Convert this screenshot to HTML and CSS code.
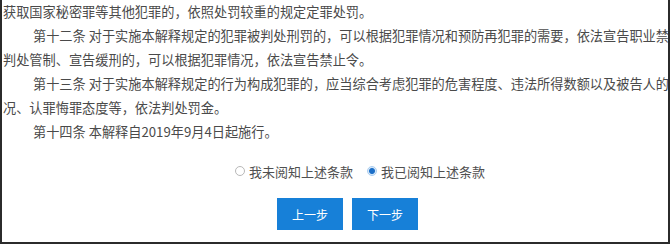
FILE: index.html
```html
<!DOCTYPE html>
<html lang="zh-CN">
<head>
    <meta charset="UTF-8">
    <meta name="viewport" content="width=device-width, initial-scale=1.0">
    <title>阅知条款</title>
    <link rel="stylesheet" href="styles.css">
</head>
<body>
    <div class="frame">
        <div class="terms">
            <p class="cont">获取国家秘密罪等其他犯罪的，依照处罚较重的规定定罪处罚。</p>
            <p>第十二条 对于实施本解释规定的犯罪被判处刑罚的，可以根据犯罪情况和预防再犯罪的需要，依法宣告职业禁止；被<br>判处管制、宣告缓刑的，可以根据犯罪情况，依法宣告禁止令。</p>
            <p>第十三条 对于实施本解释规定的行为构成犯罪的，应当综合考虑犯罪的危害程度、违法所得数额以及被告人的退赃退赔情<br>况、认罪悔罪态度等，依法判处罚金。</p>
            <p>第十四条 本解释自2019年9月4日起施行。</p>
        </div>

        <div class="agree">
            <label class="radio"><input type="radio" name="agree" value="0"> 我未阅知上述条款</label>
            <label class="radio"><input type="radio" name="agree" value="1" checked> 我已阅知上述条款</label>
        </div>

        <div class="actions">
            <button class="btn">上一步</button>
            <button class="btn">下一步</button>
        </div>
    </div>
</body>
</html>
```

FILE: styles.css
```css
body {
    margin: 0;
    background: #fff;
    font-family: "Noto Sans CJK SC", "Microsoft YaHei", sans-serif;
    color: #4a4a4a;
}
.frame {
    width: 666px;
    height: 242px;
    border: 2px solid #2b2b2b;
    border-top: none;
    overflow: hidden;
}
.terms {
    padding-left: 1px;
    font-size: 13.2px;
    line-height: 24px;
    white-space: nowrap;
}
.terms p {
    margin: 0;
    text-indent: 30px;
}
.terms p.cont {
    text-indent: 0;
}
.agree {
    display: flex;
    justify-content: center;
    align-items: center;
    gap: 14px;
    margin-top: 17px;
    padding-left: 50px;
    height: 20px;
    font-size: 13px;
    color: #505050;
}
.radio {
    display: flex;
    align-items: center;
    gap: 4px;
}
.radio input {
    appearance: none;
    -webkit-appearance: none;
    width: 10px;
    height: 10px;
    margin: 0;
    border: 1px solid #b8b8b8;
    border-radius: 50%;
    background: #fff;
}
.radio input:checked {
    border-color: #a9cdf0;
    background: radial-gradient(circle, #1c6fc8 0, #1c6fc8 2.5px, #d5e7f8 3.5px, #fff 5px);
}
.actions {
    display: flex;
    justify-content: center;
    gap: 9px;
    margin-top: 17px;
    padding-left: 25px;
}
.btn {
    width: 66px;
    height: 32px;
    border: none;
    background-color: #1780d8;
    color: #fff;
    font-family: inherit;
    font-size: 12px;
    cursor: pointer;
}
.btn:hover {
    background-color: #0f6cbb;
}
```
